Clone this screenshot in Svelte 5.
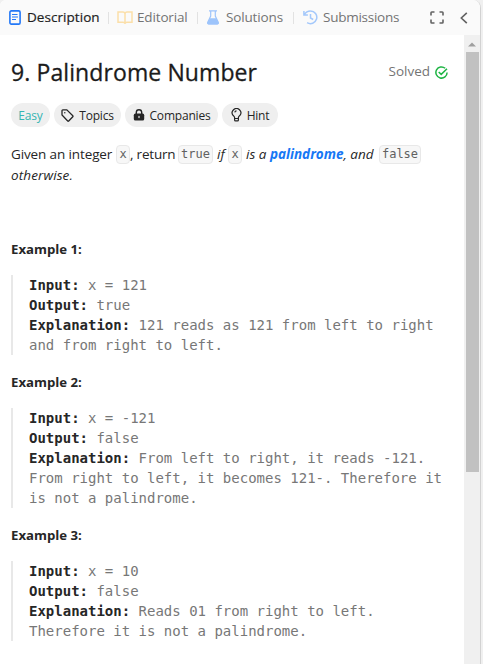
<script>
  const examples = [
    { n: 1, input: 'x = 121', output: 'true', lines: ['121 reads as 121 from left to right', 'and from right to left.'] },
    { n: 2, input: 'x = -121', output: 'false', lines: ['From left to right, it reads -121.', 'From right to left, it becomes 121-. Therefore it', 'is not a palindrome.'] },
    { n: 3, input: 'x = 10', output: 'false', lines: ['Reads 01 from right to left.', 'Therefore it is not a palindrome.'] }
  ];
</script>

<div class="page">
  <div class="panel">
    <header>
      <div class="tab active" style:width="118px">
        <svg width="12" height="15" viewBox="0 0 12 15" fill="none" stroke="#2378f7"><rect x=".9" y=".9" width="10.2" height="13.2" rx="1.4" stroke-width="1.6"/><path d="M3 4.5h5.5M3 7h6M3 9.5h4" stroke-width="1.2"/></svg>
        <span class="t1">Description</span>
      </div>
      <div class="tab" style:width="90px">
        <svg width="16" height="13" viewBox="0 0 16 13" fill="none" stroke="#fbdfa9" stroke-width="1.5"><path d="M8 11.3V2.6Q7.5 1 6 1H1v10.2h5.2q1.2 0 1.8 1.2.6-1.200 1.800-1.200H15V1h-5Q8.500 1 8 2.600"/></svg>
        <span class="t2">Editorial</span>
      </div>
      <div class="tab" style:width="96px">
        <svg width="12" height="15" viewBox="0 0 12 15"><path d="M2 .8h8M3.700 1v5L.8 12.200q-.5 1.800 1 1.800h8.400q1.500 0 1-1.800L8.300 6V1" fill="none" stroke="#9dc4fb" stroke-width="1.200"/><path d="M2.700 8.300h6.600l2.500 4.500q0 1.700-1.500 1.700H1.700Q.2 14.500.2 12.800z" fill="#9dc4fb"/></svg>
        <span class="t3">Solutions</span>
      </div>
      <div class="tab last">
        <svg width="15" height="15" viewBox="0 0 15 15" fill="none" stroke="#a4c8fb" stroke-width="1.500"><path d="M.9 1v4h4M1.300 4.600Q3.700.9 7.500 1a6.300 6.300 0 1 1-3.400 11.600M7.500 4v4l2.700 1.500"/></svg>
        <span class="t4">Submissions</span>
      </div>
      <div class="actions">
        <svg width="14" height="13" viewBox="0 0 14 13" fill="none" stroke="#626262" stroke-width="1.600"><path d="M1 4.400V1.800Q1 1 1.800 1h2.700M9.500 1h2.700q.8 0 .8.8v2.600M13 8.600v2.600q0 .8-.8.8H9.500M4.500 12H1.800Q1 12 1 11.200V8.600"/></svg>
        <svg width="8" height="12" viewBox="0 0 8 12" fill="none" stroke="#626262" stroke-width="1.600"><path d="M6.800.8 1.300 6l5.500 5.200"/></svg>
      </div>
    </header>

    <div class="body">
      <main>
        <div class="heading">
          <h1>9. Palindrome Number</h1>
          <div class="solved">
            <span>Solved</span>
            <svg width="13" height="13" viewBox="0 0 13 13" fill="none" stroke="#20b545" stroke-width="1.500"><path d="M10.200 2.300A5.600 5.600 0 1 0 12.100 6.500M3.700 6l2.500 2.400 5.800-5.600"/></svg>
          </div>
        </div>

        <div class="chips">
          <div class="chip easy" style:width="39px"><span>Easy</span></div>
          <div class="chip" style:width="67px">
            <svg width="13" height="13" viewBox="0 0 13 13" fill="none" stroke="#262626" stroke-width="1.300"><path d="M1 1.700Q1 .9 1.800.9h4l6 5.800q.5.5 0 1L7.700 12q-.5.5-1 0L1 6z"/><circle cx="3.800" cy="3.700" r=".7" fill="#262626" stroke="none"/></svg>
            <span>Topics</span>
          </div>
          <div class="chip" style:width="93px">
            <svg width="12" height="12" viewBox="0 0 12 12"><path d="M3.300 5V3.400a2.700 2.700 0 0 1 5.400 0V5" fill="none" stroke="#262626" stroke-width="1.400"/><rect x=".8" y="4.600" width="10.400" height="7" rx="1.600" fill="#262626"/><rect x="5.400" y="6.800" width="1.200" height="2.400" rx=".6" fill="#efefef"/></svg>
            <span>Companies</span>
          </div>
          <div class="chip" style:width="56px">
            <svg width="11" height="14" viewBox="0 0 11 14" fill="none" stroke="#262626" stroke-width="1.200"><path d="M3.600 9.500Q3.500 8.600 2.200 7.600a4.300 4.300 0 1 1 6.600 0Q7.500 8.600 7.400 9.500v2.400q0 1-.9 1h-2q-.9 0-.9-1zM3.600 10.500h3.800M3.800 4.300Q4 3 5.500 2.900"/></svg>
            <span>Hint</span>
          </div>
        </div>

        <div class="statement">
          <div class="row">
            <span style:width="105px" class="s1">Given an integer</span><code style:width="14px">x</code><span style:width="48px" class="s2">, return</span><code style:width="35px">true</code><em style:width="15px" class="s3">if</em><code style:width="14px">x</code><em style:width="137px" class="s4">is a <b>palindrome</b>, and</em><code style:width="42px">false</code>
          </div>
          <div class="row"><em class="s5">otherwise.</em></div>
        </div>

        {#each examples as ex}
          <section>
            <h2>Example {ex.n}:</h2>
            <div class="quote">
              <div><b>Input:</b> {ex.input}</div>
              <div><b>Output:</b> {ex.output}</div>
              <div><b>Explanation:</b> {ex.lines[0]}</div>
              {#each ex.lines.slice(1) as line}
                <div>{line}</div>
              {/each}
            </div>
          </section>
        {/each}
      </main>
      <div class="scroll">
        <svg width="8" height="5" viewBox="0 0 8 5"><path d="M0 4.500 4 .5l4 4z" fill="#9f9f9f"/></svg>
        <div class="thumb"></div>
      </div>
    </div>
  </div>
</div>

<style>
  :global(body) { background: #f0f0f0; }
  .page { width: 483px; height: 664px; overflow: hidden; font-family: "Open Sans", "Noto Sans", sans-serif; color: #262626; }
  .panel { width: 481px; height: 664px; box-sizing: border-box; border-right: 1px solid #d2d2d2; border-radius: 6px 8px 0 0; background: #fff; overflow: hidden; display: flex; flex-direction: column; }
  span, em, h1, h2, code { white-space: nowrap; }
  svg { flex: none; display: block; }
  header { height: 35px; flex: none; background: #fafafa; display: flex; align-items: center; padding-left: 9px; box-sizing: border-box; }
  .tab { display: flex; align-items: center; box-sizing: border-box; font-size: 13.5px; line-height: 20px; color: #747474; position: relative; }
  .tab span { position: relative; top: -1px; }
  .tab:not(.last)::after { content: ""; position: absolute; right: 9px; top: 4px; width: 1px; height: 12px; background: #e2e2e2; }
  .tab:nth-child(1)::after { right: 18px; }
  .tab:nth-child(1) { margin-right: -10px; }
  .active { color: #1f1f1f; -webkit-text-stroke: .2px #1f1f1f; }
  .t1 { margin-left: 6px; font-weight: 500; letter-spacing: .05px; }
  .t2 { margin-left: 4px; letter-spacing: -.15px; }
  .t3 { margin-left: 7px; letter-spacing: -.15px; }
  .t4 { margin-left: 5px; letter-spacing: -.25px; }
  .actions { margin-left: auto; display: flex; align-items: center; gap: 16px; padding-right: 12px; }
  .body { flex: 1; display: flex; min-height: 0; }
  main { width: 464px; box-sizing: border-box; padding: 20px 16px 0 11px; }
  .heading { height: 34px; display: flex; align-items: center; justify-content: space-between; }
  h1 { margin: 0; font-size: 23px; line-height: 34px; font-weight: 500; letter-spacing: .1px; color: #1b1b1b; -webkit-text-stroke: .3px #1b1b1b; }
  .solved { display: flex; align-items: center; gap: 5px; font-size: 13.5px; line-height: 20px; color: #747474; }
  .solved span { position: relative; top: -1px; }
  .chips { display: flex; gap: 4px; margin-top: 14px; }
  .chip { height: 24px; border-radius: 12px; background: #efefef; display: flex; align-items: center; justify-content: center; gap: 5px; font-size: 12px; box-sizing: border-box; letter-spacing: -.2px; }
  .easy { color: #35b5b2; }
  .statement { margin-top: 17px; height: 95px; font-size: 13.5px; line-height: 21px; }
  .row { display: flex; height: 21px; align-items: center; }
  .row span, .row em { flex: none; }
  .s1 { letter-spacing: -.12px; }
  .s2 { letter-spacing: -.2px; }
  .s5 { letter-spacing: .1px; }
  code { flex: none; box-sizing: border-box; height: 19px; border: 1px solid #e8e8e8; border-radius: 4px; background: #f7f7f7; color: #616161; font: 12px/16px "DejaVu Sans Mono", monospace; text-align: center; }
  .s3, .s4 { padding-left: 4px; box-sizing: border-box; }
  .row b { color: #1677f5; font-weight: 700; }
  section { margin-bottom: 17px; }
  h2 { margin: 0 0 16px; font-size: 13.2px; line-height: 20px; font-weight: 700; letter-spacing: 0; }
  .quote { border-left: 2px solid #e8e8e8; padding-left: 16px; font: 14px/20px "DejaVu Sans Mono", monospace; color: #777; }
  .quote div { white-space: nowrap; height: 20px; }
  .quote b { color: #262626; }
  .scroll { width: 16px; flex: none; background: #f0f0f0; display: flex; flex-direction: column; align-items: center; padding-top: 7px; box-sizing: border-box; }
  .thumb { width: 13px; height: 420px; margin-top: 5px; background: #c1c1c1; }
</style>
